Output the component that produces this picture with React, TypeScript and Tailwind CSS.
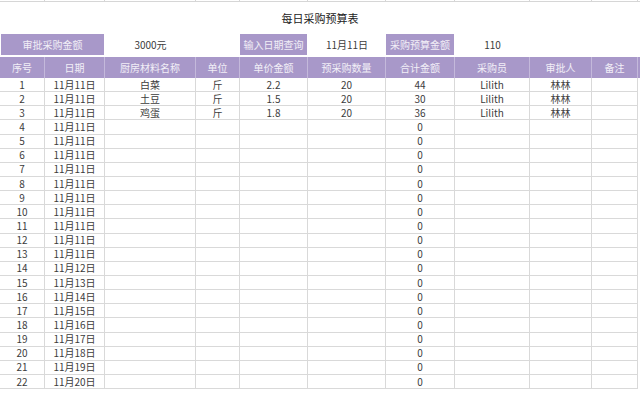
import React from 'react';

// column widths follow the sheet: 序号 … 备注
const cols = 'grid grid-cols-[45px_60px_91px_44px_68px_78px_69px_75px_62px_46px]';

const headers = ['序号', '日期', '厨房材料名称', '单位', '单价金额', '预采购数量', '合计金额', '采购员', '审批人', '备注'];

const filled = [
  { name: '白菜', unit: '斤', price: '2.2', qty: '20', total: '44', buyer: 'Lilith', approver: '林林' },
  { name: '土豆', unit: '斤', price: '1.5', qty: '20', total: '30', buyer: 'Lilith', approver: '林林' },
  { name: '鸡蛋', unit: '斤', price: '1.8', qty: '20', total: '36', buyer: 'Lilith', approver: '林林' },
];

const dayFor = (i: number) => (i < 13 ? 11 : i - 1);

const rows = Array.from({ length: 22 }, (_, i) => {
  const f = filled[i];
  return [
    String(i + 1),
    `11月${dayFor(i)}日`,
    f ? f.name : '',
    f ? f.unit : '',
    f ? f.price : '',
    f ? f.qty : '',
    f ? f.total : '0',
    f ? f.buyer : '',
    f ? f.approver : '',
    '',
  ];
});

export default function App() {
  return (
    <div
      className="w-[640px] h-[394px] overflow-hidden bg-white text-[#3c3c3c] text-[10px] leading-none"
      style={{ fontFamily: '"Noto Sans CJK SC", "Liberation Sans", sans-serif' }}
    >
      {/* bottom edge of the row above the title */}
      <div className={`${cols} h-[2px] border-b border-[#d6d6d6]`}>
        {headers.map((h) => (
          <div key={h} className="border-r border-[#d6d6d6]" />
        ))}
      </div>

      <div className="h-[32px] flex items-center justify-center text-[11px] text-[#222] pt-[1px]">
        每日采购预算表
      </div>

      {/* summary row */}
      <div className={`${cols} h-[21px]`}>
        <div className="col-span-2 bg-[#a898c9] text-white/85 flex items-center justify-center ml-[1px] mr-[1px]">
          审批采购金额
        </div>
        <div className="flex items-center justify-center">3000元</div>
        <div />
        <div className="bg-[#a898c9] text-white/85 flex items-center justify-center mr-[1px]">输入日期查询</div>
        <div className="flex items-center justify-center">11月11日</div>
        <div className="bg-[#a898c9] text-white/85 flex items-center justify-center mr-[1px]">采购预算金额</div>
        <div className="flex items-center justify-center">110</div>
        <div />
        <div />
      </div>

      {/* header */}
      <div className={`${cols} h-[21px] mt-[2px] bg-[#a898c9] text-white/85`}>
        {headers.map((h) => (
          <div key={h} className="flex items-center justify-center border-r border-[#c4b9db]">
            {h}
          </div>
        ))}
      </div>

      {rows.map((r, i) => (
        <div key={i} className={`${cols} h-[14.15px]`}>
          {r.map((c, j) => (
            <div
              key={j}
              className="flex items-center justify-center border-r border-b border-[#d9d9d9] whitespace-nowrap"
            >
              {c}
            </div>
          ))}
        </div>
      ))}
    </div>
  );
}
